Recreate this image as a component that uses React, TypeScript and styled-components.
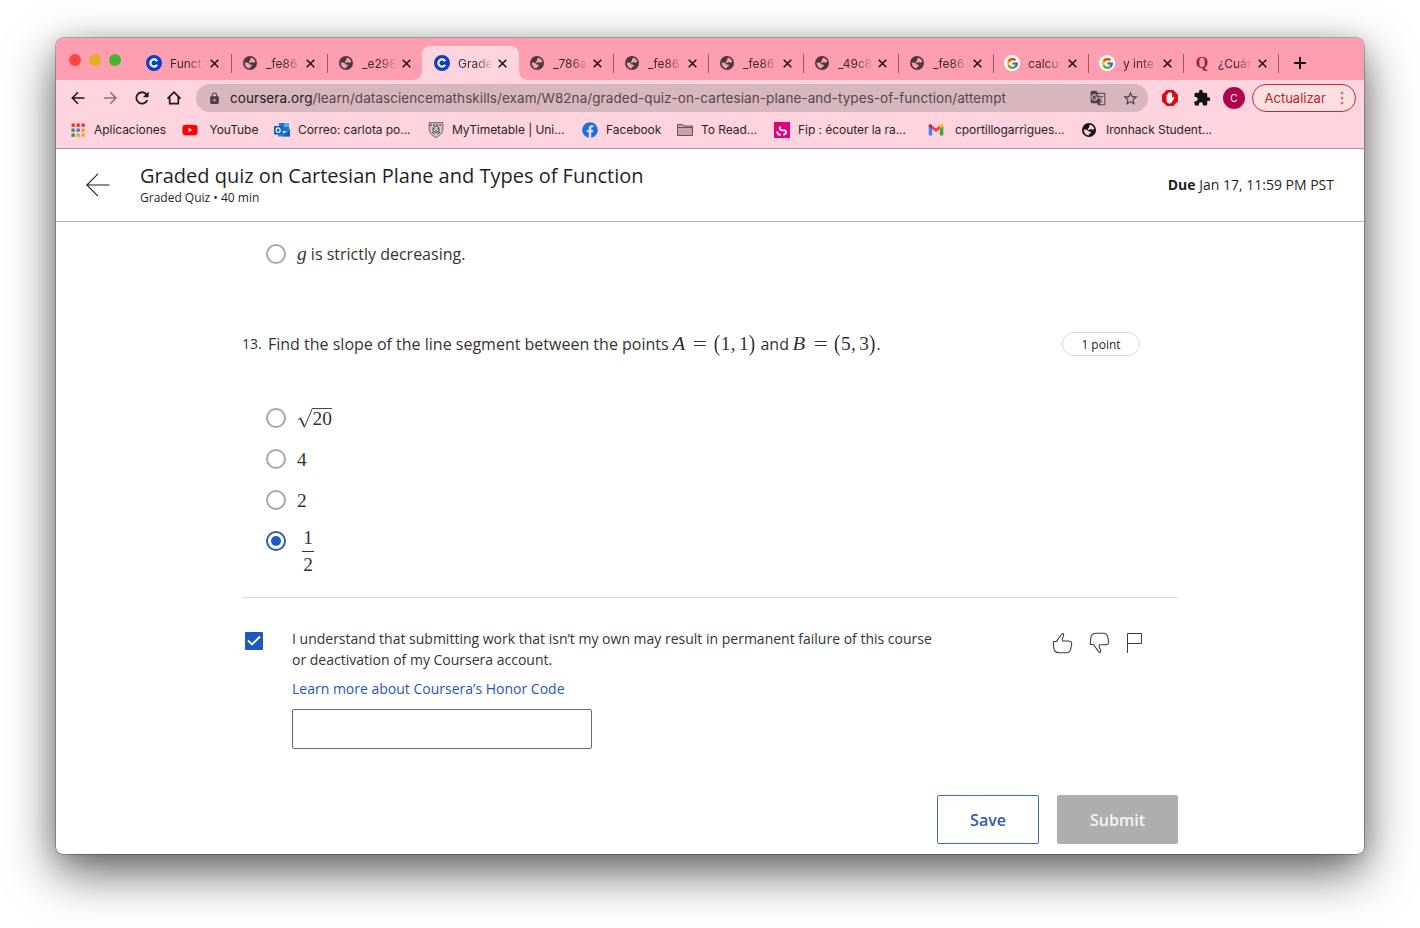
import React from "react";
import styled, { createGlobalStyle, css } from "styled-components";
import { FcGoogle } from "react-icons/fc";
import { FaFacebook, FaYoutube } from "react-icons/fa";
import { MdExtension, MdGTranslate, MdLock, MdStarBorder } from "react-icons/md";

const ui = `Inter, "Liberation Sans", sans-serif`;
const body = `"Open Sans", "Noto Sans", sans-serif`;
const math = `"Liberation Serif", serif`;

const Global = createGlobalStyle`
  * { box-sizing: border-box; }
  body { margin: 0; background: #fff; overflow: hidden; }
  svg { display: block; flex: none; }
`;

const Desktop = styled.div`
  width: 1420px;
  height: 928px;
  padding: 38px 56px 74px;
`;

const Window = styled.div`
  width: 1308px;
  height: 816px;
  display: flex;
  flex-direction: column;
  overflow: hidden;
  border-radius: 7px;
  background: #fff;
  box-shadow: 0 0 0 0.5px rgba(0, 0, 0, 0.5), 0 18px 50px rgba(0, 0, 0, 0.62), 0 4px 22px rgba(0, 0, 0, 0.14);
`;

/* ---------- Tab strip ---------- */

const TabStrip = styled.div`
  height: 42px;
  flex: none;
  display: flex;
  padding: 8px 0 0 13px;
  background: #ff9eb1;
`;

const Lights = styled.div`
  display: flex;
  gap: 8px;
  padding-top: 8px;
  margin-right: 14.5px;
`;

const Light = styled.span<{ $color: string }>`
  width: 12px;
  height: 12px;
  border-radius: 50%;
  background: ${(p) => p.$color};
`;

const Tab = styled.div<{ $width: number; $active?: boolean; $divided?: boolean }>`
  position: relative;
  width: ${(p) => p.$width}px;
  height: 34px;
  flex: none;
  display: flex;
  align-items: center;
  padding-left: 10.5px;
  font: 400 12px ${ui};
  color: #3f2a30;
  ${(p) =>
    p.$divided &&
    css`
      &::after {
        content: "";
        position: absolute;
        right: 0;
        top: 8px;
        width: 1px;
        height: 19px;
        background: #8f5f69;
      }
    `}
  ${(p) =>
    p.$active &&
    css`
      margin-left: -1.5px;
      padding-left: 12px;
      background: #ffd4de;
      border-radius: 8px 8px 0 0;
      &::before,
      &::after {
        content: "";
        position: absolute;
        bottom: 0;
        width: 8px;
        height: 8px;
      }
      &::before {
        left: -8px;
        background: radial-gradient(circle at 0 0, transparent 7.5px, #ffd4de 8px);
      }
      &::after {
        right: -8px;
        background: radial-gradient(circle at 100% 0, transparent 7.5px, #ffd4de 8px);
      }
    `}
`;

const TabIcon = styled.span`
  width: 16px;
  height: 16px;
  flex: none;
  display: flex;
  align-items: center;
  justify-content: center;
`;

const TabTitle = styled.span`
  width: 40px;
  margin-left: 8px;
  white-space: nowrap;
  mask-image: linear-gradient(90deg, #000 18px, transparent 35px);
`;

const GoogleDisc = styled.span`
  width: 16px;
  height: 16px;
  display: flex;
  align-items: center;
  justify-content: center;
  border-radius: 50%;
  background: #fff;
`;

const Quora = styled.span`
  font: 700 16px ${math};
  color: #a81c16;
`;

const NewTab = styled.div`
  width: 43px;
  height: 34px;
  display: flex;
  align-items: center;
  justify-content: center;
`;

/* ---------- Address bar ---------- */

const Toolbar = styled.div`
  height: 36px;
  flex: none;
  display: flex;
  align-items: center;
  padding: 0 8px 0 14px;
  background: #ffd4de;
`;

const NavButtons = styled.div`
  display: flex;
  gap: 16px;
  margin-right: 14px;
`;

const Omnibox = styled.div`
  width: 952px;
  height: 28px;
  display: flex;
  align-items: center;
  padding: 0 9px 0 12px;
  border-radius: 14px;
  background: #d8b6be;
  color: #4b4145;
`;

const Url = styled.span`
  flex: 1;
  margin-left: 9px;
  white-space: nowrap;
  font: 400 13.5px ${ui};
  letter-spacing: 0.07px;
  color: #54464b;
  b {
    font-weight: 400;
    color: #1d1a1b;
  }
`;

const OmniIcons = styled.div`
  display: flex;
  gap: 16px;
`;

const Extensions = styled.div`
  display: flex;
  align-items: center;
  gap: 15px;
  margin: 0 7px 0 14px;
`;

const Avatar = styled.span`
  width: 22px;
  height: 22px;
  margin-left: -3px;
  border-radius: 50%;
  display: flex;
  align-items: center;
  justify-content: center;
  background: #b0004b;
  color: #fff;
  font: 400 10px ${ui};
`;

const UpdateButton = styled.div`
  width: 104px;
  height: 28px;
  display: flex;
  align-items: center;
  justify-content: space-between;
  padding: 0 11px 0 11.5px;
  border: 1px solid #c02a35;
  border-radius: 14px;
  background: #fae0e1;
  color: #b3242b;
  font: 400 13px ${ui};
`;

/* ---------- Bookmarks ---------- */

const Bookmarks = styled.div`
  height: 33px;
  flex: none;
  display: grid;
  grid-template-columns: 112px 92px 154px 154px 95px 97px 154px 154px 150px;
  align-items: center;
  padding: 0 0 5px 14px;
  background: #ffd4de;
  border-bottom: 1px solid #a8969b;
`;

const Bookmark = styled.div<{ $gap?: number }>`
  display: flex;
  align-items: center;
  gap: ${(p) => p.$gap ?? 8}px;
  font: 400 12px ${ui};
  letter-spacing: -0.05px;
  color: #2a2326;
  white-space: nowrap;
`;

/* ---------- Quiz page ---------- */

const Header = styled.header`
  height: 73px;
  flex: none;
  display: flex;
  align-items: center;
  padding: 0 30px;
  border-bottom: 1px solid #b5b5b5;
  font-family: ${body};
  color: #1f1f1f;
`;

const Heading = styled.div`
  flex: 1;
  margin-left: 30px;
`;

const Title = styled.h1`
  margin: 0;
  font-size: 20px;
  line-height: 26px;
  font-weight: 400;
`;

const Subtitle = styled.div`
  font-size: 12px;
  line-height: 18px;
`;

const Due = styled.div`
  padding-bottom: 2px;
  font-size: 14px;
  b {
    font-weight: 700;
  }
`;

const Main = styled.main`
  width: 936px;
  margin-left: 186px;
  display: flex;
  flex-direction: column;
  font-family: ${body};
  color: #333;
`;

const Option = styled.div`
  height: 41px;
  display: flex;
  align-items: center;
  gap: 11px;
  padding-left: 24px;
  font-size: 16px;
`;

const PreviousOption = styled(Option)`
  height: 63px;
`;

const FractionOption = styled(Option)`
  height: 77px;
  align-items: flex-start;
  padding-top: 11px;
`;

const Radio = styled.span<{ $checked?: boolean }>`
  width: 20px;
  height: 20px;
  flex: none;
  display: flex;
  align-items: center;
  justify-content: center;
  border-radius: 50%;
  border: 2px solid ${(p) => (p.$checked ? "#2a5db5" : "#a8a8a8")};
  &::after {
    content: "";
    width: 10px;
    height: 10px;
    border-radius: 50%;
    background: ${(p) => (p.$checked ? "#2059c0" : "transparent")};
  }
`;

const Question = styled.div`
  height: 26px;
  display: flex;
  align-items: center;
  margin: 46px 38px 40px 0;
  font-size: 16px;
`;

const Num = styled.span`
  width: 26px;
  padding-bottom: 2px;
  font-size: 14px;
`;

const Prompt = styled.span`
  flex: 1;
  white-space: nowrap;
`;

const Points = styled.span`
  width: 78px;
  height: 24px;
  display: flex;
  align-items: center;
  justify-content: center;
  border: 1px solid #d9d9d9;
  border-radius: 12px;
  font-size: 12px;
  color: #1f1f1f;
`;

const Formula = styled.span`
  font: 400 19.4px/1 ${math};
  white-space: nowrap;
`;

const Answer = styled(Formula)`
  padding-top: 2px;
`;

const Sym = styled.span<{ $w: number; $italic?: boolean; $sx?: number; $sy?: number; $align?: string }>`
  display: inline-block;
  width: ${(p) => p.$w}em;
  text-align: ${(p) => p.$align ?? "center"};
  font-style: ${(p) => (p.$italic ? "italic" : "normal")};
  transform: scale(${(p) => p.$sx ?? 1}, ${(p) => p.$sy ?? 1});
`;

const Root = styled.span`
  display: flex;
  align-items: center;
`;

const Radicand = styled.span`
  margin-left: -20.5px;
  padding-top: 2px;
  font: 400 19.4px/22px ${math};
`;

const Fraction = styled.span`
  width: 12px;
  display: flex;
  flex-direction: column;
  align-items: center;
  margin-left: 5px;
  font: 400 19.4px/14px ${math};
  span:first-child {
    width: 100%;
    text-align: center;
    padding-bottom: 6px;
    border-bottom: 1px solid #333;
  }
  span:last-child {
    padding-top: 6px;
  }
`;

const Agreement = styled.section`
  display: flex;
  align-items: flex-start;
  border-top: 1px solid #d8d8d8;
  padding: 30px 36px 0 3px;
`;

const Checkbox = styled.span`
  width: 18px;
  height: 18px;
  margin-top: 4px;
  display: flex;
  align-items: center;
  justify-content: center;
  border-radius: 1px;
  background: #2059bd;
`;

const Honor = styled.div`
  flex: 1;
  margin-left: 29px;
  font-size: 14px;
  line-height: 21px;
  white-space: nowrap;
`;

const HonorLink = styled.a`
  display: block;
  margin: 8px 0 10px;
  color: #1f55c0;
`;

const NameInput = styled.input`
  display: block;
  width: 300px;
  height: 40px;
  padding: 0 12px;
  border: 1px solid #6b6b6b;
  border-radius: 2px;
  background: #fff;
  outline: none;
`;

const Feedback = styled.div`
  display: flex;
  margin-top: 4px;
  gap: 16px;
`;

const Actions = styled.div`
  display: flex;
  justify-content: flex-end;
  gap: 18px;
  margin-top: 46px;
`;

const Button = styled.button<{ $primary?: boolean }>`
  width: ${(p) => (p.$primary ? 121 : 102)}px;
  height: 49px;
  padding: 0;
  border: 1px solid ${(p) => (p.$primary ? "#aeaeae" : "#3a6cc0")};
  border-radius: 2px;
  background: ${(p) => (p.$primary ? "#aeaeae" : "#fff")};
  color: ${(p) => (p.$primary ? "#f4f4f4" : "#2a5bb5")};
  font: 600 16px ${body};
`;

/* ---------- Icons ---------- */

const Globe = ({ color = "#4a3a3f", bg = "#ff9eb1" }) => (
  <svg width="14" height="14" viewBox="0 0 14 14">
    <circle cx="7" cy="7" r="7" fill={color} />
    <path d="M8.200 1.700c2 .5 3.600 2 4.100 4l-1.600 1-2.300-.7-1.500 1.200-1.300-1.300 1.500-1.300.1-1.500z" fill={bg} />
    <path d="M1.800 6.500l3.200.3 1.600 1.600 2.200.3-.2 1.700-1.600.7-.2 1.300C4 12.300 1.700 9.900 1.800 6.500z" fill={bg} />
  </svg>
);

const Coursera = () => (
  <svg width="16" height="16" viewBox="0 0 16 16">
    <circle cx="8" cy="8" r="8" fill="#0b41c4" />
    <path d="M11.100 6.200A3.600 3.600 0 1 0 11.100 9.800" fill="none" stroke="#fff" strokeWidth="2.200" />
  </svg>
);

const Close = () => (
  <svg width="9" height="9" viewBox="0 0 9 9" stroke="#1d1518" strokeWidth="1.6">
    <path d="M.7.7 8.300 8.300M8.300.7.7 8.300" />
  </svg>
);

const Plus = () => (
  <svg width="12" height="12" viewBox="0 0 12 12" stroke="#111" strokeWidth="2">
    <path d="M6 0v12M0 6h12" />
  </svg>
);

const NavArrow = ({ forward = false }) => (
  <svg width="16" height="16" viewBox="0 0 16 16" fill="none" stroke={forward ? "#8f7279" : "#1d1a1b"} strokeWidth="1.6">
    {forward ? <path d="M1.800 8h12M8.300 2.300 14 8l-5.700 5.700" /> : <path d="M14.500 8h-12M8 2.300 2.300 8 8 13.700" />}
  </svg>
);

const Reload = () => (
  <svg width="16" height="16" viewBox="0 0 16 16">
    <path d="M13.300 10.200A5.700 5.700 0 1 1 12.500 4.400" fill="none" stroke="#1d1a1b" strokeWidth="1.800" />
    <path d="M14.600 1.500v5.800H8.800z" fill="#1d1a1b" />
  </svg>
);

const Home = () => (
  <svg width="16" height="16" viewBox="0 0 16 16" fill="none" stroke="#1d1a1b" strokeWidth="1.700">
    <path d="M1.500 8.600 8 2.100l6.500 6.500M3.700 7.300v6.400h8.600V7.300" />
  </svg>
);

const Adblock = () => (
  <svg width="16" height="16" viewBox="0 0 16 16">
    <path d="M4.700 0h6.600L16 4.700v6.600L11.300 16H4.700L0 11.300V4.700z" fill="#d90c14" />
    <path
      d="M4.600 8.800V5c0-1 1.300-1 1.300 0V3.400c0-1 1.400-1 1.400 0V2.800c0-1 1.400-1 1.400 0v.7c0-1 1.400-1 1.400 0v4.800l1-1.100c.7-.5 1.500 0 1.100.7l-2.200 4.200c-.5.9-1.200 1.300-1.900 1.300H7.200C5.400 13.400 4.600 12 4.600 10.600z"
      fill="#fff"
    />
  </svg>
);

const Dots = () => (
  <svg width="4" height="14" viewBox="0 0 4 14" fill="#e0767c">
    <circle cx="2" cy="2" r="1.500" />
    <circle cx="2" cy="7" r="1.500" />
    <circle cx="2" cy="12" r="1.500" />
  </svg>
);

const appColors = ["#e0392f", "#e0392f", "#e0392f", "#2c9350", "#3f77e0", "#eda02b", "#2c9350", "#eda02b", "#eda02b"];
const Apps = () => (
  <svg width="16" height="16" viewBox="0 0 16 16">
    {appColors.map((c, i) => (
      <rect key={i} x={1.5 + (i % 3) * 5} y={1.5 + Math.floor(i / 3) * 5} width="3.300" height="3.300" fill={c} />
    ))}
  </svg>
);

const Outlook = () => (
  <svg width="16" height="16" viewBox="0 0 16 16">
    <path d="M5 1h10v8H5z" fill="#1677cc" />
    <path d="M10 1h5v4h-5z" fill="#42b5f0" />
    <path d="M4 8l6 3 6-4v7.500H4z" fill="#1f8fe0" />
    <path d="M16 7.500v7H8z" fill="#123f80" opacity=".6" />
    <rect x="0" y="4" width="8.500" height="8.500" rx=".8" fill="#0f63b8" />
    <ellipse cx="4.200" cy="8.200" rx="2" ry="2.300" fill="none" stroke="#fff" strokeWidth="1.200" />
  </svg>
);

const Shield = () => (
  <svg width="16" height="16" viewBox="0 0 16 16">
    <path d="M1.200.7h13.600v6.500c0 4-3.300 6.500-6.800 8.300C4.500 13.700 1.200 11.200 1.200 7.200z" fill="#d8c6c6" stroke="#6a5a5e" />
    <path d="M2 3h12" stroke="#6a5a5e" strokeWidth="1.400" strokeDasharray="2 1" />
    <circle cx="8" cy="7.500" r="3" fill="#efe8e0" stroke="#555" strokeWidth="1.200" />
    <path d="M6 7h1.500M8.700 7h1.500M7 9h2M4 10l2.500 2.500M12 10l-2.500 2.500" stroke="#444" />
  </svg>
);

const Folder = () => (
  <svg width="16" height="16" viewBox="0 0 16 16">
    <path d="M.5 2.500h5.300l1.200 1.500h8.500v9.500H.5z" fill="#c9a4ac" stroke="#6a5358" />
    <path d="M.5 5.500h15" stroke="#6a5358" />
  </svg>
);

const Fip = () => (
  <svg width="16" height="16" viewBox="0 0 16 16">
    <path d="M0 0h16v16H0z" fill="#e2007a" />
    <path d="M6.300 4.500c-1 1.800-.6 3.200 1 3.700s3.600-.4 4.600.8-.4 3.300-2.600 3.800M3 9.500c.4 1.800 1.500 3.200 3.500 3.500" fill="none" stroke="#fff" strokeWidth="1.900" />
  </svg>
);

const Gmail = () => (
  <svg width="16" height="16" viewBox="0 0 16 16">
    <path d="M.7 3.500v9c0 .6.400 1 1 1h2.500V6.300z" fill="#4285f4" />
    <path d="M15.300 3.500v9c0 .6-.4 1-1 1h-2.500V6.300z" fill="#34a853" />
    <path d="M11.800 3.600V7l3.500-2.600V3.600c0-1.300-1.200-1.800-2.100-1.100z" fill="#fbbc04" />
    <path d="M.7 4.400 4.200 7V3.600L2.800 2.500C1.900 1.800.7 2.300.7 3.600z" fill="#c5221f" />
    <path d="M4.200 3.600 8 6.500l3.800-2.900V7L8 9.900 4.200 7z" fill="#ea4335" />
  </svg>
);

const BackArrow = () => (
  <svg width="24" height="24" viewBox="0 0 24 24" fill="none" stroke="#1f1f1f" strokeWidth="1.100">
    <path d="M23.500 12H.8M12 .8.800 12 12 23.200" />
  </svg>
);

const Radical = () => (
  <svg width="36" height="22" viewBox="0 0 36 22" fill="none" stroke="#333">
    <path d="M1 12.800 3.500 10.800" strokeWidth=".9" />
    <path d="M3.300 11 7.300 19.500" strokeWidth="1.700" />
    <path d="M7.300 20.500 15.300 1.500H35" strokeWidth=".9" />
  </svg>
);

const thumb =
  "M1 9.200h3.200l5-7.200c.500-1 2-.7 2 .5 0 2-1.600 3.600-1.600 5.500 0 .7.400.9 1 .9h5.600c2.200 0 3.400 2 2.600 3.900l-.8 3.900c-.6 2-1.600 3.500-3.700 3.500H7C3.600 20.200 1.600 18.300 1.500 15.500L1 9.200z";
const Thumb = ({ down = false }) => (
  <svg width="21" height="22" viewBox="0 0 20 21.500" fill="none" stroke="#3a3a3a">
    <path d={thumb} transform={down ? "rotate(180 10 10.700) translate(20 0) scale(-1 1)" : undefined} />
  </svg>
);

const Flag = () => (
  <svg width="16" height="21" viewBox="0 0 16 21" fill="none" stroke="#3a3a3a">
    <path d="M1.500 21V1.500h14v10h-14" />
  </svg>
);

/* ---------- Data ---------- */

const google = (
  <GoogleDisc>
    <FcGoogle size={13} />
  </GoogleDisc>
);

const tabs = [
  { icon: <Coursera />, title: "Funct", width: 96, divided: true },
  { icon: <Globe />, title: "_fe86", width: 96, divided: true },
  { icon: <Globe />, title: "_e298", width: 96 },
  { icon: <Coursera />, title: "Grade", width: 96.5, active: true },
  { icon: <Globe />, title: "_786a", width: 95, divided: true },
  { icon: <Globe />, title: "_fe86", width: 95, divided: true },
  { icon: <Globe />, title: "_fe86", width: 95, divided: true },
  { icon: <Globe />, title: "_49c8", width: 95, divided: true },
  { icon: <Globe />, title: "_fe86", width: 95, divided: true },
  { icon: google, title: "calcu", width: 95, divided: true },
  { icon: google, title: "y inte", width: 95, divided: true },
  { icon: <Quora>Q</Quora>, title: "¿Cuár", width: 95, divided: true },
];

const bookmarks = [
  { icon: <Apps />, label: "Aplicaciones" },
  { icon: <FaYoutube size={16} color="#f00" />, label: "YouTube", gap: 11.5 },
  { icon: <Outlook />, label: "Correo: carlota po..." },
  { icon: <Shield />, label: "MyTimetable | Uni..." },
  { icon: <FaFacebook size={16} color="#1272ee" />, label: "Facebook" },
  { icon: <Folder />, label: "To Read..." },
  { icon: <Fip />, label: "Fip : écouter la ra..." },
  { icon: <Gmail />, label: "cportillogarrigues...", gap: 11 },
  { icon: <Globe color="#161214" bg="#ffd4de" />, label: "Ironhack Student...", gap: 10 },
];

const Pair = ({ name, x, y }: { name: string; x: number; y: number }) => (
  <Formula>
    <Sym $w={0.75} $italic $align="left" $sx={1.08}>{name}</Sym>
    <Sym $w={1.334} $sx={1.3}>=</Sym>
    <Sym $w={0.389} $sy={1.15}>(</Sym>
    <Sym $w={0.5}>{x}</Sym>
    <Sym $w={0.278}>,</Sym>
    <Sym $w={0.667} $align="right">{y}</Sym>
    <Sym $w={0.389} $sy={1.15} $align="left">)</Sym>
  </Formula>
);

export default function App() {
  return (
    <Desktop>
      <Global />
      <Window>
        <TabStrip>
          <Lights>
            <Light $color="#ff453f" />
            <Light $color="#dfb01f" />
            <Light $color="#45b629" />
          </Lights>
          {tabs.map((t, i) => (
            <Tab key={i} $width={t.width} $active={t.active} $divided={t.divided}>
              <TabIcon>{t.icon}</TabIcon>
              <TabTitle>{t.title}</TabTitle>
              <Close />
            </Tab>
          ))}
          <NewTab>
            <Plus />
          </NewTab>
        </TabStrip>

        <Toolbar>
          <NavButtons>
            <NavArrow />
            <NavArrow forward />
            <Reload />
            <Home />
          </NavButtons>
          <Omnibox>
            <MdLock size={13} />
            <Url>
              <b>coursera.org</b>/learn/datasciencemathskills/exam/W82na/graded-quiz-on-cartesian-plane-and-types-of-function/attempt
            </Url>
            <OmniIcons>
              <MdGTranslate size={16} />
              <MdStarBorder size={17} />
            </OmniIcons>
          </Omnibox>
          <Extensions>
            <Adblock />
            <MdExtension size={18} color="#151213" />
            <Avatar>C</Avatar>
          </Extensions>
          <UpdateButton>
            Actualizar
            <Dots />
          </UpdateButton>
        </Toolbar>

        <Bookmarks>
          {bookmarks.map((b) => (
            <Bookmark key={b.label} $gap={b.gap}>
              {b.icon}
              {b.label}
            </Bookmark>
          ))}
        </Bookmarks>

        <Header>
          <BackArrow />
          <Heading>
            <Title>Graded quiz on Cartesian Plane and Types of Function</Title>
            <Subtitle>Graded Quiz • 40 min</Subtitle>
          </Heading>
          <Due>
            <b>Due</b> Jan 17, 11:59 PM PST
          </Due>
        </Header>

        <Main>
          <PreviousOption>
            <Radio />
            <span>
              <Formula>
                <Sym $w={0.5} $italic>g</Sym>
              </Formula>{" "}
              is strictly decreasing.
            </span>
          </PreviousOption>

          <Question>
            <Num>13.</Num>
            <Prompt>
              Find the slope of the line segment between the points <Pair name="A" x={1} y={1} /> and{" "}
              <Pair name="B" x={5} y={3} />.
            </Prompt>
            <Points>1 point</Points>
          </Question>

          <Option>
            <Radio />
            <Root>
              <Radical />
              <Radicand>20</Radicand>
            </Root>
          </Option>
          <Option>
            <Radio />
            <Answer>4</Answer>
          </Option>
          <Option>
            <Radio />
            <Answer>2</Answer>
          </Option>
          <FractionOption>
            <Radio $checked />
            <Fraction>
              <span>1</span>
              <span>2</span>
            </Fraction>
          </FractionOption>

          <Agreement>
            <Checkbox>
              <svg width="14" height="12" viewBox="0 0 14 12" fill="none" stroke="#fff" strokeWidth="1.900">
                <path d="M1 5.500 5 9.500 13 1.500" />
              </svg>
            </Checkbox>
            <Honor>
              I understand that submitting work that isn’t my own may result in permanent failure of this course
              <br />
              or deactivation of my Coursera account.
              <HonorLink>Learn more about Coursera’s Honor Code</HonorLink>
              <NameInput />
            </Honor>
            <Feedback>
              <Thumb />
              <Thumb down />
              <Flag />
            </Feedback>
          </Agreement>

          <Actions>
            <Button>Save</Button>
            <Button $primary>Submit</Button>
          </Actions>
        </Main>
      </Window>
    </Desktop>
  );
}
